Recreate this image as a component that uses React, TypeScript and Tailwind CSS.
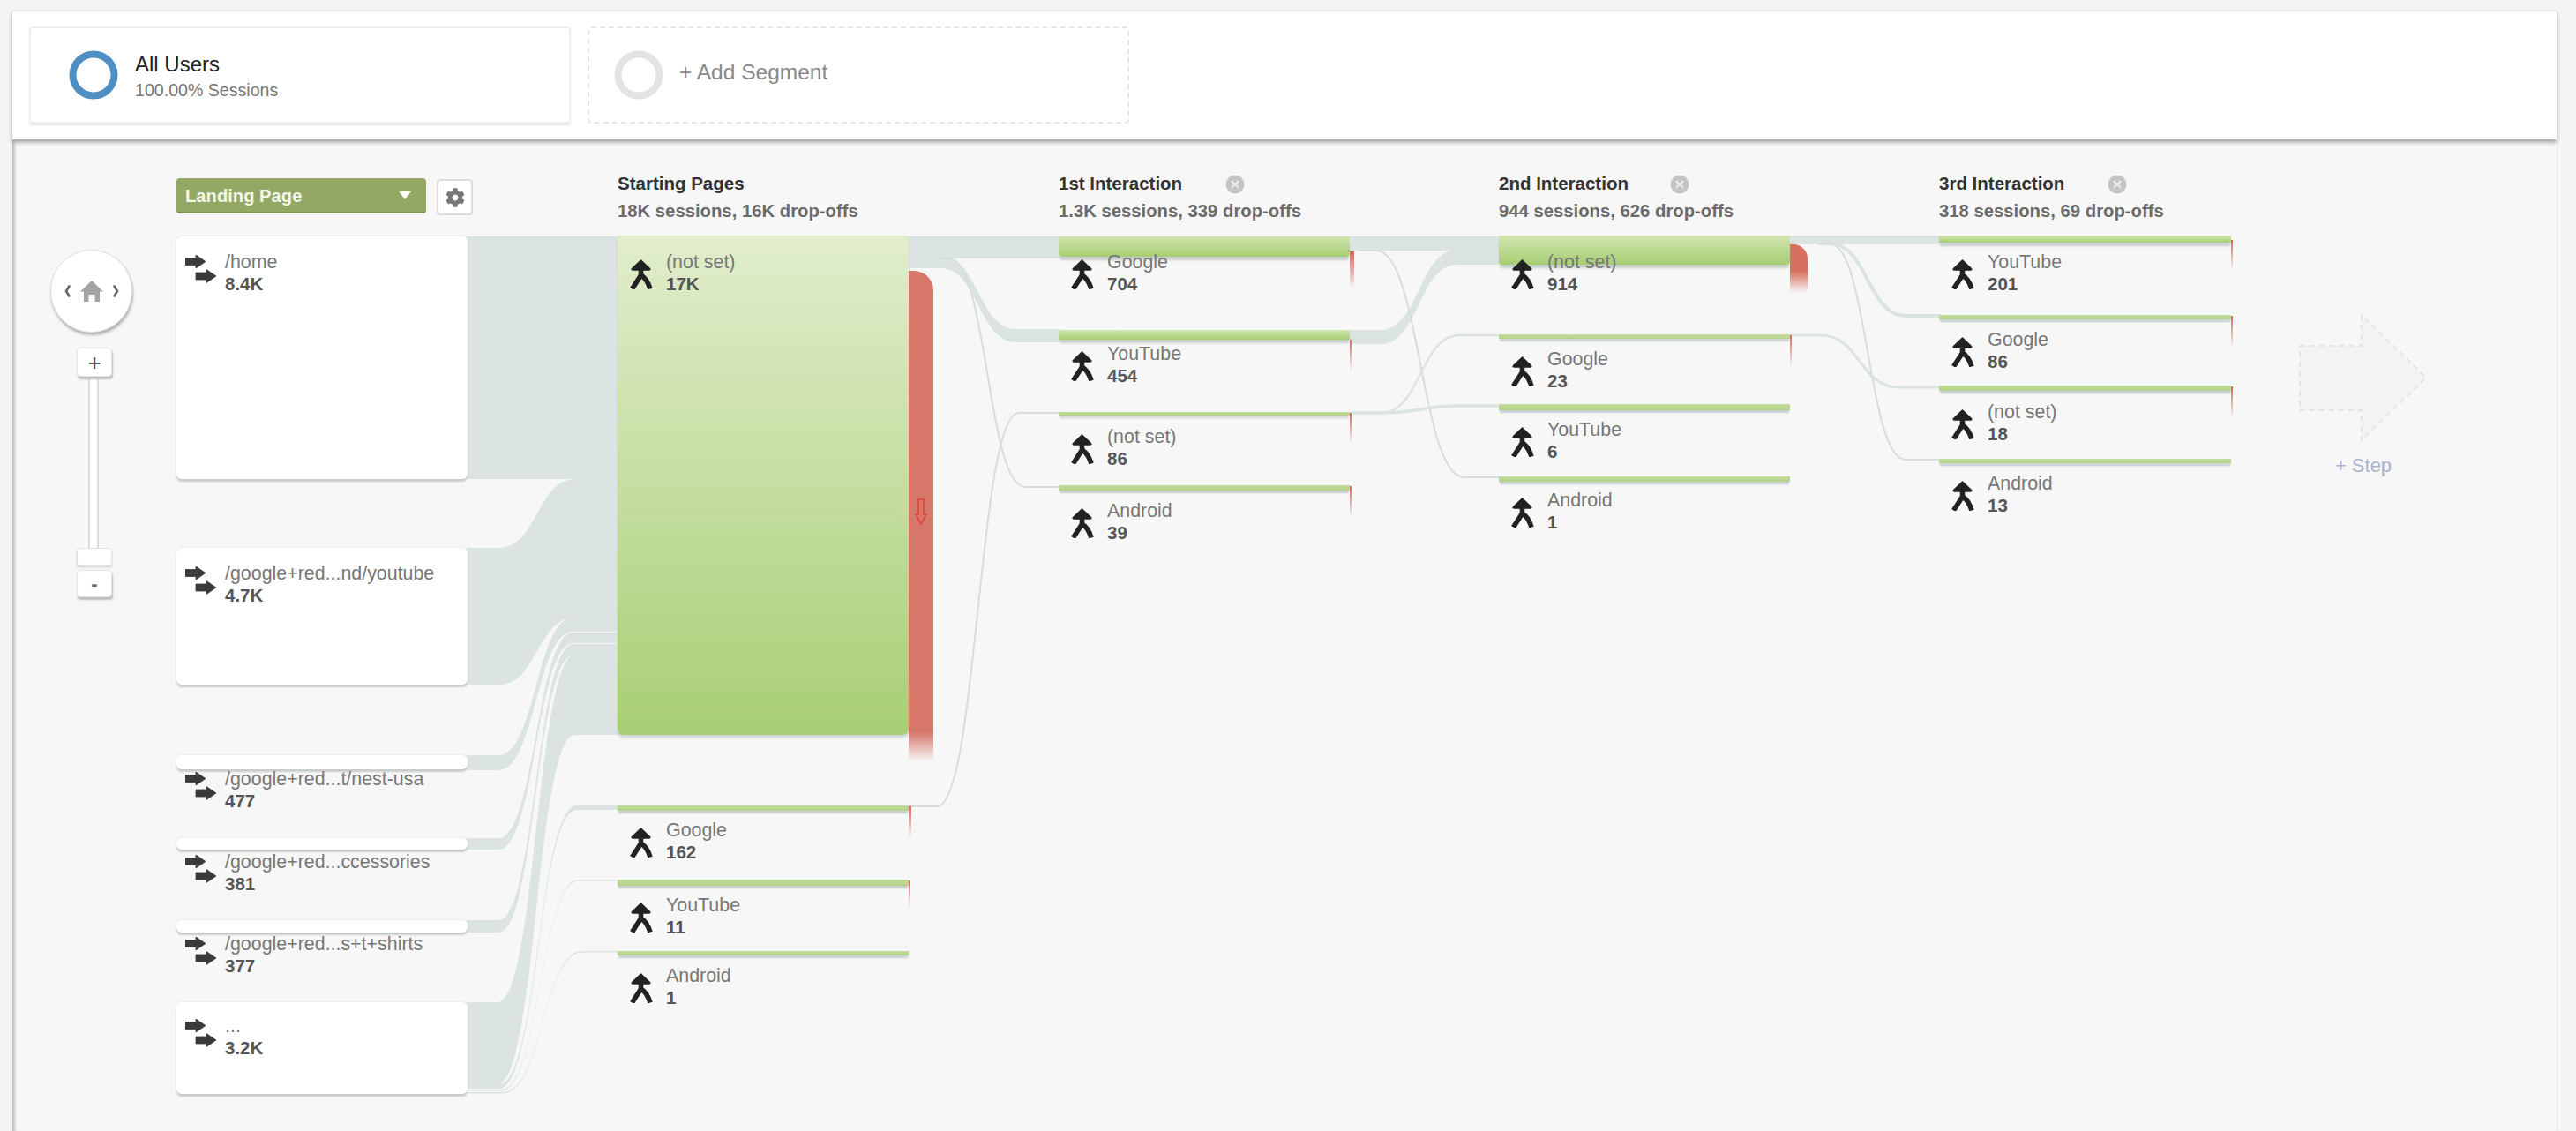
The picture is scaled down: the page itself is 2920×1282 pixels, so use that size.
import React from "react";
import { FaCog } from "react-icons/fa";

const C = "#dbe3e3";
const L = "#d5dddd";

function Merge() {
  return (
    <svg viewBox="0 0 28 34" className="w-[28px] h-[34px] shrink-0">
      <path d="M13.5 1 L23.5 10.5 Q24.5 12 22.5 12 L4.5 12 Q2.5 12 3.5 10.5 Z" fill="#222" stroke="#222" strokeWidth="1.5" strokeLinejoin="round" />
      <path d="M13.5 10 L13.5 18 L3.5 33.5 M13.5 18 Q20.5 22 24 33.5" fill="none" stroke="#222" strokeWidth="5.6" strokeLinejoin="round" />
    </svg>
  );
}

function Entrance() {
  return (
    <svg viewBox="0 0 35 32" className="w-[35px] h-[32px] shrink-0">
      <path d="M0 3.5 H12 V0 L23 7.5 L12 15 V11.5 H0 Z" fill="#3a3a3a" stroke="#3a3a3a" strokeWidth="0.8" strokeLinejoin="round" />
      <path d="M12 20 H24 V16.5 L35 24 L24 31.5 V28 H12 Z" fill="#3a3a3a" stroke="#3a3a3a" strokeWidth="0.8" strokeLinejoin="round" />
    </svg>
  );
}

function Close() {
  return (
    <svg viewBox="0 0 22 22" className="w-[22px] h-[22px] shrink-0">
      <circle cx="11" cy="11" r="10.5" fill="#c4c4c4" />
      <path d="M7 7 L15 15 M15 7 L7 15" stroke="#ececec" strokeWidth="2" />
    </svg>
  );
}

function Donut({ color }: { color: string }) {
  return (
    <svg viewBox="0 0 56 56" className="w-[56px] h-[56px] shrink-0">
      <circle cx="28" cy="28" r="23.5" fill="none" stroke={color} strokeWidth="8" />
    </svg>
  );
}

function Header({ title, sub, cls, close }: { title: string; sub: string; cls: string; close?: string }) {
  return (
    <div className={cls}>
      <div className={"flex items-center justify-between h-[25px] text-[20.5px] font-bold text-[#333] whitespace-nowrap " + (close ?? "")}>
        <span>{title}</span>
        {close ? <Close /> : null}
      </div>
      <div className="mt-[6px] text-[20.3px] leading-[25px] font-bold text-[#6b6b6b] whitespace-nowrap">{sub}</div>
    </div>
  );
}

function Text({ label, value }: { label: string; value: string }) {
  return (
    <div className="text-[21.4px] leading-[25px] text-[#777] whitespace-nowrap">
      <div className="mt-[1px] -mb-[1px]">{label}</div>
      <div className="text-[20.5px] font-bold text-[#555]">{value}</div>
    </div>
  );
}

const bar = "relative shrink-0 bg-[linear-gradient(#d2e5b0,#a6cd72)] shadow-[0_5px_3px_-1px_#c6cfcd]";
const thin = "relative shrink-0 bg-[linear-gradient(#c2dc9c,#b2d28a)] shadow-[0_4px_2px_-1px_#c6cfcd]";

function Node({ cls, off, label, value, drop }: { cls: string; off: string; label: string; value: string; drop?: React.ReactNode }) {
  return (
    <div className={cls}>
      <div className={"flex gap-[14px] pl-[13px] " + off}>
        <div className="mt-[10px]"><Merge /></div>
        <Text label={label} value={value} />
      </div>
      {drop}
    </div>
  );
}

function Sliver({ cls }: { cls: string }) {
  return <div className={"absolute left-full bg-[linear-gradient(#d2685a,#f7f7f7)] " + cls} />;
}

function Entry({ cls, off, label, value }: { cls: string; off: string; label: string; value: string }) {
  return (
    <div className={"shrink-0 w-[330px] bg-white rounded-[6px] shadow-[0_3px_2px_#c9cccc,0_-1px_1px_#ececec] " + cls}>
      <div className={"flex gap-[10px] pl-[10px] " + off}>
        <div className="mt-[5px]"><Entrance /></div>
        <Text label={label} value={value} />
      </div>
    </div>
  );
}

function ribbon(x0: number, a0: number, b0: number, x1: number, a1: number, b1: number, s: number, e: number) {
  const m = (s + e) / 2;
  return `M${x0} ${a0} L${s} ${a0} C${m} ${a0} ${m} ${a1} ${e} ${a1} L${x1} ${a1} L${x1} ${b1} L${e} ${b1} C${m} ${b1} ${m} ${b0} ${s} ${b0} L${x0} ${b0} Z`;
}

function line(x0: number, y0: number, x1: number, y1: number, s: number, e: number) {
  const m = (s + e) / 2;
  return `M${x0} ${y0} L${s} ${y0} C${m} ${y0} ${m} ${y1} ${e} ${y1} L${x1} ${y1}`;
}

function Flows() {
  return (
    <svg viewBox="14 158 2884 1124" className="absolute left-0 top-0 w-[2884px] h-[1124px]">
      <g fill={C}>
        <rect x="525" y="268" width="177" height="275" />
        <path d={ribbon(525, 621, 776, 702, 543, 700, 566, 652)} />
        <path d={ribbon(525, 856, 873, 702, 700, 716, 565, 650)} />
        <path d={ribbon(525, 950, 963, 702, 717, 729, 565, 650)} />
        <path d={ribbon(525, 1043, 1057, 702, 730, 743, 565, 650)} />
        <path d={ribbon(525, 1136, 1229, 702, 742, 833, 564, 652)} />
        <path d={ribbon(525, 1229, 1234, 702, 913, 918, 566, 654)} />
        <path d={ribbon(525, 1235, 1236.5, 702, 997, 998.5, 568, 656)} />
        <path d={ribbon(525, 1238, 1239.5, 702, 1078, 1079.5, 570, 660)} />
        <rect x="1030" y="268" width="172" height="25" />
        <path d={ribbon(1030, 290, 304, 1202, 373, 388, 1066, 1152)} />
        <rect x="1530" y="268" width="172" height="16" />
        <path d={ribbon(1530, 374, 390, 1702, 283, 300, 1565, 1652)} />
        <rect x="2029" y="267" width="171" height="10" />
      </g>
      <g fill="none" stroke={C}>
        <path d={line(1060, 293, 1202, 552, 1076, 1162)} strokeWidth="2" stroke={L} />
        <path d={line(1030, 914, 1202, 468, 1062, 1155)} strokeWidth="2" stroke={L} />
        <path d={line(1540, 284, 1702, 541, 1560, 1660)} strokeWidth="2" stroke={L} />
        <path d={line(1530, 468, 1702, 380, 1566, 1654)} strokeWidth="2.4" />
        <path d={line(1530, 468, 1702, 460, 1566, 1654)} strokeWidth="3.4" />
        <path d={line(2060, 276, 2200, 358, 2074, 2160)} strokeWidth="4" />
        <path d={line(2060, 276, 2200, 521, 2074, 2160)} strokeWidth="2" stroke={L} />
        <path d={line(2029, 380, 2200, 439, 2064, 2152)} strokeWidth="3" />
      </g>
    </svg>
  );
}

function Rail() {
  return (
    <div className="relative w-[186px] shrink-0 pt-[125px] pl-[43px] flex flex-col items-start">
      <div className="w-[93px] h-[94px] rounded-full bg-white border border-[#ddd] shadow-[1px_3px_3px_#b5b5b5] flex items-center justify-center">
        <svg viewBox="0 0 62 26" className="w-[62px] h-[26px]">
          <path d="M6 6.5 L2 13 L6 19.5 M56 6.5 L60 13 L56 19.5" fill="none" stroke="#666" strokeWidth="2.6" />
          <path d="M31 1 L44 13.5 L40 13.5 L40 25 L34.5 25 L34.5 17 L27.5 17 L27.5 25 L22 25 L22 13.5 L18 13.5 Z" fill="#a3a3a3" />
        </svg>
      </div>
      <div className="ml-[30px] mt-[17px] w-[40px] flex flex-col items-center">
        <div className="relative z-10 w-[40px] h-[33px] bg-white rounded-[4px] border border-[#e4e4e4] shadow-[1px_3px_2px_#bdbdbd] flex items-center justify-center text-[26px] leading-none text-[#444]">+</div>
        <div className="-ml-[2px] w-[12px] h-[194px] bg-white border-x-2 border-[#dcdcdc]" />
        <div className="w-[40px] h-[20px] bg-white rounded-[3px] border border-[#e2e2e2] shadow-[0_2px_2px_#cfcfcf]" />
        <div className="mt-[5px] w-[40px] h-[31px] bg-white rounded-[4px] border border-[#e4e4e4] shadow-[1px_3px_2px_#bdbdbd] flex items-center justify-center text-[22px] font-bold leading-none text-[#666]">-</div>
      </div>
    </div>
  );
}

export default function App() {
  return (
    <div className="w-[2920px] h-[1282px] overflow-hidden bg-[#f5f5f5] pt-[12px] pl-[14px] pr-[22px] font-['Liberation_Sans',Arial,sans-serif] flex flex-col">
      <div className="relative z-10 h-[146px] shrink-0 bg-white border-t border-[#e8e8e8] shadow-[0_3px_5px_#9a9a9a] flex items-start gap-[19px] pl-[19px] pt-[17px]">
        <div className="w-[614px] h-[110px] rounded-[4px] border-2 border-[#efefef] shadow-[0_2px_2px_#e4e4e4] flex items-center pl-[43px] gap-[19px]">
          <Donut color="#4f8fc3" />
          <div className="mt-[3px]">
            <div className="text-[24px] leading-[28px] text-[#222]">All Users</div>
            <div className="mt-[3px] text-[19.6px] leading-[25px] text-[#777]">100.00% Sessions</div>
          </div>
        </div>
        <div className="w-[614px] h-[110px] rounded-[4px] border-2 border-dashed border-[#e6e6e6] flex items-center pl-[28px] gap-[18px]">
          <Donut color="#e3e3e3" />
          <div className="-mt-[6px] text-[24.5px] text-[#888]">+ Add Segment</div>
        </div>
      </div>

      <div className="relative flex-1 min-h-0 flex items-start bg-[#f7f7f7] shadow-[inset_5px_0_3px_-2px_#c2c2c2,1px_0_1px_#e5e5e5]">
        <Flows />
        <Rail />

        <div className="relative flex flex-col w-[330px] shrink-0 pt-[44px]">
          <div className="flex items-start gap-[12px] mb-[24px]">
            <div className="w-[283px] h-[40px] shrink-0 rounded-[4px] bg-[#94a866] border-b-2 border-[#7d9150] flex items-center justify-between pl-[10px] pr-[17px] text-[20.2px] font-bold text-[#f2f5e8]">
              <span className="mt-[2px]">Landing Page</span>
              <span className="w-0 h-0 border-x-[7px] border-x-transparent border-t-[9px] border-t-white" />
            </div>
            <div className="mt-[1px] w-[41px] h-[41px] shrink-0 rounded-[4px] bg-white border-2 border-[#dcdcdc] flex items-center justify-center">
              <FaCog className="w-[22px] h-[22px] text-[#777]" />
            </div>
          </div>
          <Entry cls="h-[275px] mb-[78px]" off="mt-[16px]" label="/home" value="8.4K" />
          <Entry cls="h-[155px] mb-[80px]" off="mt-[16px]" label="/google+red...nd/youtube" value="4.7K" />
          <Entry cls="h-[16px] mb-[78px]" off="mt-[14px]" label="/google+red...t/nest-usa" value="477" />
          <Entry cls="h-[13px] mb-[80px]" off="mt-[14px]" label="/google+red...ccessories" value="381" />
          <Entry cls="h-[14px] mb-[79px]" off="mt-[14px]" label="/google+red...s+t+shirts" value="377" />
          <Entry cls="h-[104px]" off="mt-[14px]" label="..." value="3.2K" />
        </div>

        <div className="flex flex-col w-[330px] shrink-0 ml-[170px] pt-[38px]">
          <Header cls="mb-[15px]" title="Starting Pages" sub="18K sessions, 16K drop-offs" />
          <Node
            cls="relative shrink-0 h-[566px] mb-[80px] rounded-b-[6px] bg-[linear-gradient(#e1edcc,#a8cf75)] shadow-[0_3px_3px_#cfd4d6]"
            off="mt-[17px]"
            label="(not set)"
            value="17K"
            drop={
              <div className="absolute left-full top-[40px] w-[28px] h-[556px] rounded-tr-[22px] bg-[linear-gradient(#d6776a_0%,#d6776a_94%,#f7f7f7_100%)] flex items-start justify-center pt-[258px]">
                <svg viewBox="0 0 14 30" className="w-[14px] h-[30px]">
                  <path d="M4 1 H10 V18 H13 L7 29 L1 18 H4 Z" fill="none" stroke="#e0453a" strokeWidth="1.6" />
                </svg>
              </div>
            }
          />
          <Node cls={thin + " h-[6px] mb-[78px]"} off="mt-[15px]" label="Google" value="162" drop={<Sliver cls="top-[1px] w-[3px] h-[36px]" />} />
          <Node cls={thin + " h-[7px] mb-[74px]"} off="mt-[16px]" label="YouTube" value="11" drop={<Sliver cls="top-[1px] w-[2px] h-[32px]" />} />
          <Node cls={thin + " h-[5px]"} off="mt-[15px]" label="Android" value="1" />
        </div>

        <div className="flex flex-col w-[330px] shrink-0 ml-[170px] pt-[38px]">
          <Header cls="mb-[16px]" title="1st Interaction" close="w-[211px]" sub="1.3K sessions, 339 drop-offs" />
          <Node cls={bar + " h-[23px] mb-[83px] rounded-b-[4px]"} off="mt-[16px]" label="Google" value="704" drop={<Sliver cls="top-[17px] w-[5px] h-[42px]" />} />
          <Node cls={bar + " h-[11px] mb-[82px]"} off="mt-[14px]" label="YouTube" value="454" drop={<Sliver cls="top-[11px] w-[2px] h-[36px]" />} />
          <Node cls={thin + " h-[4px] mb-[79px]"} off="mt-[15px]" label="(not set)" value="86" drop={<Sliver cls="top-[1px] w-[2px] h-[36px]" />} />
          <Node cls={thin + " h-[6px]"} off="mt-[16px]" label="Android" value="39" drop={<Sliver cls="top-[1px] w-[2px] h-[36px]" />} />
        </div>

        <div className="flex flex-col w-[330px] shrink-0 ml-[169px] pt-[38px]">
          <Header cls="mb-[15px]" title="2nd Interaction" close="w-[216px]" sub="944 sessions, 626 drop-offs" />
          <Node
            cls={bar + " h-[33px] mb-[79px] rounded-b-[4px]"}
            off="mt-[17px]"
            label="(not set)"
            value="914"
            drop={<div className="absolute left-full top-[10px] w-[20px] h-[55px] rounded-tr-[16px] bg-[linear-gradient(#d8705f_0%,#d8705f_55%,#f7f7f7_100%)]" />}
          />
          <Node cls={thin + " h-[5px] mb-[74px]"} off="mt-[15px]" label="Google" value="23" drop={<Sliver cls="top-[1px] w-[2px] h-[36px]" />} />
          <Node cls={thin + " h-[7px] mb-[75px]"} off="mt-[16px]" label="YouTube" value="6" />
          <Node cls={thin + " h-[6px]"} off="mt-[14px]" label="Android" value="1" />
        </div>

        <div className="flex flex-col w-[331px] shrink-0 ml-[169px] pt-[38px]">
          <Header cls="mb-[15px]" title="3rd Interaction" close="w-[213px]" sub="318 sessions, 69 drop-offs" />
          <Node cls={bar + " h-[8px] mb-[82px]"} off="mt-[17px]" label="YouTube" value="201" drop={<Sliver cls="top-[5px] w-[2px] h-[34px]" />} />
          <Node cls={thin + " h-[5px] mb-[75px]"} off="mt-[15px]" label="Google" value="86" drop={<Sliver cls="top-[1px] w-[2px] h-[36px]" />} />
          <Node cls={thin + " h-[6px] mb-[77px]"} off="mt-[17px]" label="(not set)" value="18" drop={<Sliver cls="top-[1px] w-[2px] h-[36px]" />} />
          <Node cls={thin + " h-[5px]"} off="mt-[15px]" label="Android" value="13" />
        </div>

        <div className="flex flex-col items-center w-[146px] shrink-0 ml-[77px] pt-[198px]">
          <svg viewBox="2606 356 146 145" className="w-[146px] h-[145px]">
            <path d="M2607 392 H2677 V357 L2750 428 L2677 499 V465 H2607 Z" fill="#f3f3f3" stroke="#e4e4e4" strokeWidth="2" strokeDasharray="6 5" />
          </svg>
          <div className="mt-[13px] text-[22px] leading-[28px] text-[#aab4ca]">+ Step</div>
        </div>
      </div>
    </div>
  );
}
